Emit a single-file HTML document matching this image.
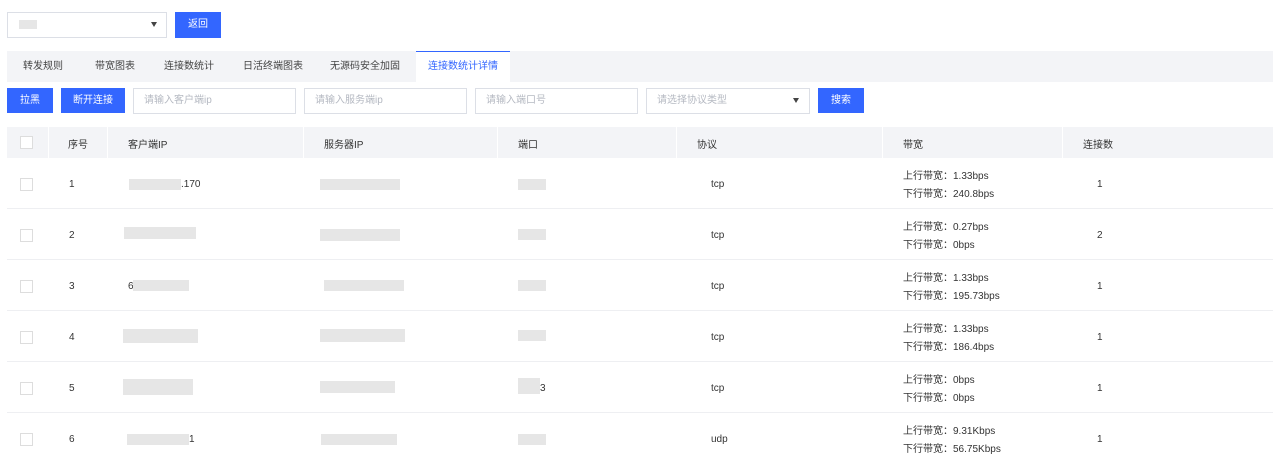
<!DOCTYPE html>
<html><head><meta charset="utf-8"><style>
*{margin:0;padding:0;box-sizing:border-box}
body{width:1280px;height:462px;background:#fff;font-family:"Liberation Sans","Noto Sans CJK SC",sans-serif;font-size:10px;color:#333;position:relative;overflow:hidden}
.a{position:absolute}
.s{position:absolute;margin-top:2px}
.btn{position:absolute;background:#3366ff;color:#fff;text-align:center;font-size:10px}
.inp{position:absolute;border:1px solid #dcdfe6;background:#fff;color:#b5b9c2;font-size:10px;padding-left:10px;height:26px;line-height:24px}
.tab{position:absolute;top:51px;height:31px;line-height:31px;font-size:10px;color:#444}
.blur{position:absolute;background:#e6e6e6;height:11px;margin-top:1px}
.cb{position:absolute;left:20px;width:13px;height:13px;border:1px solid #ddd;background:#fff;margin-top:1px}
.hd{position:absolute;top:127px;height:31px;background:#f3f4f7}
.row{position:absolute;left:7px;width:1266px;height:1px;background:#eeeff2}
</style></head><body>
<div class="inp" style="left:7px;top:12px;width:160px;height:26px"></div>
<div class="a" style="left:19px;top:20px;width:18px;height:9px;background:#e6e6e6"></div>
<div class="a" style="left:151px;top:22px;width:0;height:0;border-left:3.5px solid transparent;border-right:3.5px solid transparent;border-top:5px solid #444"></div>
<div class="btn" style="left:175px;top:12px;width:46px;height:26px;line-height:26px">返回</div>

<div class="a" style="left:7px;top:51px;width:1266px;height:31px;background:#f3f4f7"></div>
<div class="a" style="left:416px;top:51px;width:94px;height:31px;background:#fff;border-top:1px solid #3366ff"></div>
<div class="tab" style="left:23px">转发规则</div>
<div class="tab" style="left:95px">带宽图表</div>
<div class="tab" style="left:164px">连接数统计</div>
<div class="tab" style="left:243px">日活终端图表</div>
<div class="tab" style="left:330px">无源码安全加固</div>
<div class="tab" style="left:428px;color:#3366ff">连接数统计详情</div>

<div class="btn" style="left:7px;top:88px;width:46px;height:25px;line-height:25px">拉黑</div>
<div class="btn" style="left:61px;top:88px;width:64px;height:25px;line-height:25px">断开连接</div>
<div class="inp" style="left:133px;top:88px;width:163px">请输入客户端ip</div>
<div class="inp" style="left:304px;top:88px;width:163px">请输入服务端ip</div>
<div class="inp" style="left:475px;top:88px;width:163px">请输入端口号</div>
<div class="inp" style="left:646px;top:88px;width:164px">请选择协议类型</div>
<div class="a" style="left:793px;top:98px;width:0;height:0;border-left:3.5px solid transparent;border-right:3.5px solid transparent;border-top:5px solid #444"></div>
<div class="btn" style="left:818px;top:88px;width:46px;height:25px;line-height:25px">搜索</div>

<div class="hd" style="left:7px;width:41px"></div>
<div class="hd" style="left:49px;width:58px"></div>
<div class="hd" style="left:108px;width:195px"></div>
<div class="hd" style="left:304px;width:193px"></div>
<div class="hd" style="left:498px;width:178px"></div>
<div class="hd" style="left:677px;width:205px"></div>
<div class="hd" style="left:883px;width:179px"></div>
<div class="hd" style="left:1063px;width:210px"></div>
<div class="cb" style="top:135px"></div>
<div class="a" style="top:136px;left:68px">序号</div>
<div class="a" style="top:136px;left:128px">客户端IP</div>
<div class="a" style="top:136px;left:324px">服务器IP</div>
<div class="a" style="top:136px;left:518px">端口</div>
<div class="a" style="top:136px;left:697px">协议</div>
<div class="a" style="top:136px;left:903px">带宽</div>
<div class="a" style="top:136px;left:1083px">连接数</div>

<div class="row" style="top:208px"></div>
<div class="row" style="top:259px"></div>
<div class="row" style="top:310px"></div>
<div class="row" style="top:361px"></div>
<div class="row" style="top:412px"></div>

<div class="cb" style="top:177px"></div><div class="s" style="top:177px;left:69px">1</div>
<div class="blur" style="left:129px;top:178px;width:52px"></div><div class="s" style="top:177px;left:181px">.170</div>
<div class="blur" style="left:320px;top:178px;width:80px"></div><div class="blur" style="left:518px;top:178px;width:28px"></div>
<div class="s" style="top:177px;left:711px">tcp</div>
<div class="a" style="top:167px;left:903px">上行带宽：1.33bps</div><div class="a" style="top:185px;left:903px">下行带宽：240.8bps</div>
<div class="s" style="top:177px;left:1097px">1</div>

<div class="cb" style="top:228px"></div><div class="s" style="top:228px;left:69px">2</div>
<div class="blur" style="left:124px;top:226px;width:72px;height:12px"></div>
<div class="blur" style="left:320px;top:228px;width:80px;height:12px"></div><div class="blur" style="left:518px;top:228px;width:28px"></div>
<div class="s" style="top:228px;left:711px">tcp</div>
<div class="a" style="top:218px;left:903px">上行带宽：0.27bps</div><div class="a" style="top:236px;left:903px">下行带宽：0bps</div>
<div class="s" style="top:228px;left:1097px">2</div>

<div class="cb" style="top:279px"></div><div class="s" style="top:279px;left:69px">3</div>
<div class="s" style="top:279px;left:128px">6</div><div class="blur" style="left:133px;top:279px;width:56px"></div>
<div class="blur" style="left:324px;top:279px;width:80px"></div><div class="blur" style="left:518px;top:279px;width:28px"></div>
<div class="s" style="top:279px;left:711px">tcp</div>
<div class="a" style="top:269px;left:903px">上行带宽：1.33bps</div><div class="a" style="top:287px;left:903px">下行带宽：195.73bps</div>
<div class="s" style="top:279px;left:1097px">1</div>

<div class="cb" style="top:330px"></div><div class="s" style="top:330px;left:69px">4</div>
<div class="blur" style="left:123px;top:328px;width:75px;height:14px"></div>
<div class="blur" style="left:320px;top:328px;width:85px;height:13px"></div><div class="blur" style="left:518px;top:329px;width:28px"></div>
<div class="s" style="top:330px;left:711px">tcp</div>
<div class="a" style="top:320px;left:903px">上行带宽：1.33bps</div><div class="a" style="top:338px;left:903px">下行带宽：186.4bps</div>
<div class="s" style="top:330px;left:1097px">1</div>

<div class="cb" style="top:381px"></div><div class="s" style="top:381px;left:69px">5</div>
<div class="blur" style="left:123px;top:378px;width:70px;height:16px"></div>
<div class="blur" style="left:320px;top:380px;width:75px;height:12px"></div><div class="blur" style="left:518px;top:377px;width:22px;height:16px"></div><div class="s" style="top:381px;left:540px">3</div>
<div class="s" style="top:381px;left:711px">tcp</div>
<div class="a" style="top:371px;left:903px">上行带宽：0bps</div><div class="a" style="top:389px;left:903px">下行带宽：0bps</div>
<div class="s" style="top:381px;left:1097px">1</div>

<div class="cb" style="top:432px"></div><div class="s" style="top:432px;left:69px">6</div>
<div class="blur" style="left:127px;top:433px;width:62px"></div><div class="s" style="top:432px;left:189px">1</div>
<div class="blur" style="left:321px;top:433px;width:76px"></div><div class="blur" style="left:518px;top:433px;width:28px"></div>
<div class="s" style="top:432px;left:711px">udp</div>
<div class="a" style="top:422px;left:903px">上行带宽：9.31Kbps</div><div class="a" style="top:440px;left:903px">下行带宽：56.75Kbps</div>
<div class="s" style="top:432px;left:1097px">1</div>
</body></html>
